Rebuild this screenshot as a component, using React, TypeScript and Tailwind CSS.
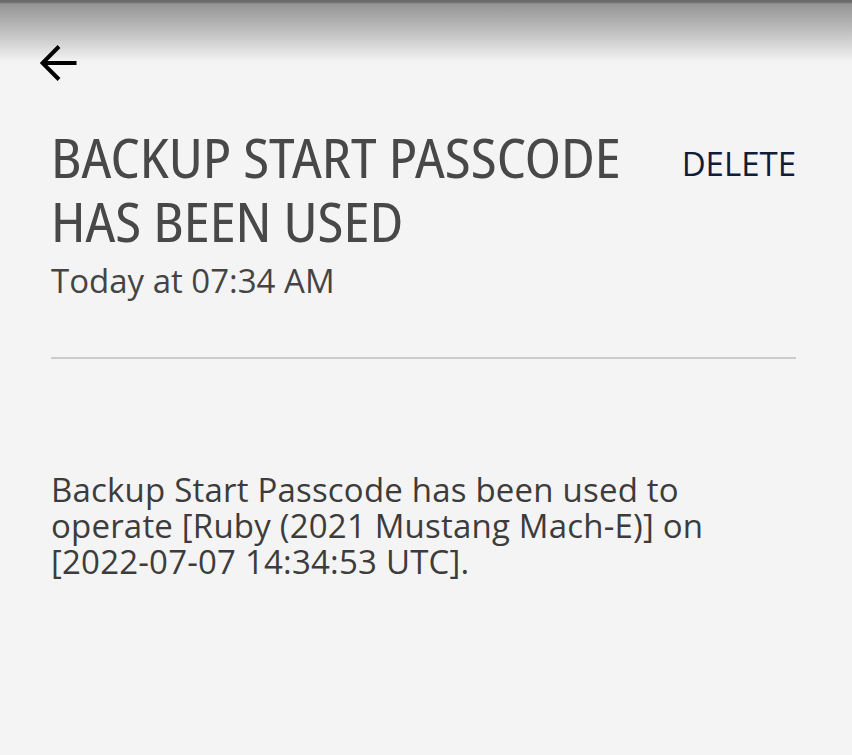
export default function App() {
  return (
    <div className="w-full h-[755px] bg-[#f4f4f4] flex flex-col font-['Open_Sans',sans-serif]">
      <div className="h-[125px] shrink-0 bg-[linear-gradient(to_bottom,#6a6a6a_0px,#6a6a6a_2px,#959595_4px,#bdbdbd_30px,#f4f4f4_62px,#f4f4f4_100%)] pl-[40px] pt-[45px]">
        <svg width="37" height="37" viewBox="0 0 37 37" fill="none" stroke="#000" strokeWidth="4" strokeLinecap="butt" strokeLinejoin="miter">
          <path d="M3.5 18H36.5" />
          <path d="M19 1.5L2.5 18L19 34.5" />
        </svg>
      </div>
      <div className="pl-[51px] pr-[56px]">
        <div className="flex justify-between items-start">
          <h1 className="text-[54.6px] leading-[64px] text-[#484848] font-normal font-['Noto_Sans_Display','Open_Sans',sans-serif] font-stretch-condensed">
            BACKUP START PASSCODE
            <br />
            HAS BEEN USED
          </h1>
          <button className="mt-[19px] text-[33px] leading-[40px] text-[#0f1d3a]">DELETE</button>
        </div>
        <div className="mt-[10px] text-[33px] leading-[36px] text-[#444444]">Today at 07:34 AM</div>
        <div className="mt-[58px] h-[2px] bg-[#cbcbcb]" />
        <p className="mt-[113px] text-[33px] leading-[36px] tracking-[0.2px] text-[#3c3c3c]">
          Backup Start Passcode has been used to
          <br />
          operate [Ruby (2021 Mustang Mach-E)] on
          <br />
          [2022-07-07 14:34:53 UTC].
        </p>
      </div>
    </div>
  );
}
